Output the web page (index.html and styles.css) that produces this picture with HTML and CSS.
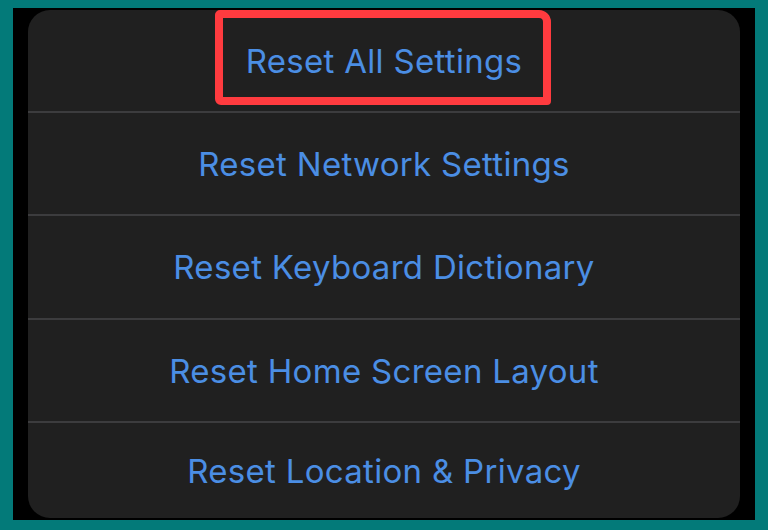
FILE: index.html
```html
<!DOCTYPE html>
<html lang="en">
<head>
    <meta charset="UTF-8">
    <meta name="viewport" content="width=device-width, initial-scale=1.0">
    <title>Reset</title>
    <link rel="stylesheet" href="styles.css">
</head>
<body>
    <div class="screen">
        <div class="card">
            <div class="row row-1">
                Reset All Settings
                <span class="marker"></span>
            </div>
            <div class="row row-2">Reset Network Settings</div>
            <div class="row row-3">Reset Keyboard Dictionary</div>
            <div class="row row-4">Reset Home Screen Layout</div>
            <div class="row row-5">Reset Location &amp; Privacy</div>
        </div>
    </div>
</body>
</html>
```

FILE: styles.css
```css
html, body {
    margin: 0;
    height: 100%;
}
body {
    background: #037a79;
    padding: 8px 13px 10px 13px;
    box-sizing: border-box;
    font-family: Inter, "Noto Sans", sans-serif;
}
.screen {
    background: #000;
    height: 100%;
    padding: 2px 15px;
    box-sizing: border-box;
}
.card {
    background: #202020;
    border-radius: 22px;
    height: 100%;
    display: flex;
    flex-direction: column;
}
.row {
    position: relative;
    display: flex;
    align-items: center;
    justify-content: center;
    color: #4b8ee4;
    font-size: 33px;
    letter-spacing: 0.3px;
}
.row + .row { border-top: 2px solid #3c3c3e; }
.row-1 { height: 101px; }
.row-2 { height: 101px; }
.row-3 { height: 102px; }
.row-4 { height: 101px; }
.row-5 { height: 95px; }
.marker {
    position: absolute;
    left: 187px;
    top: 0;
    width: 336px;
    height: 95px;
    border: 8px solid #ff3b3f;
    border-radius: 5px 12px 4px 6px;
    box-sizing: border-box;
}
```
